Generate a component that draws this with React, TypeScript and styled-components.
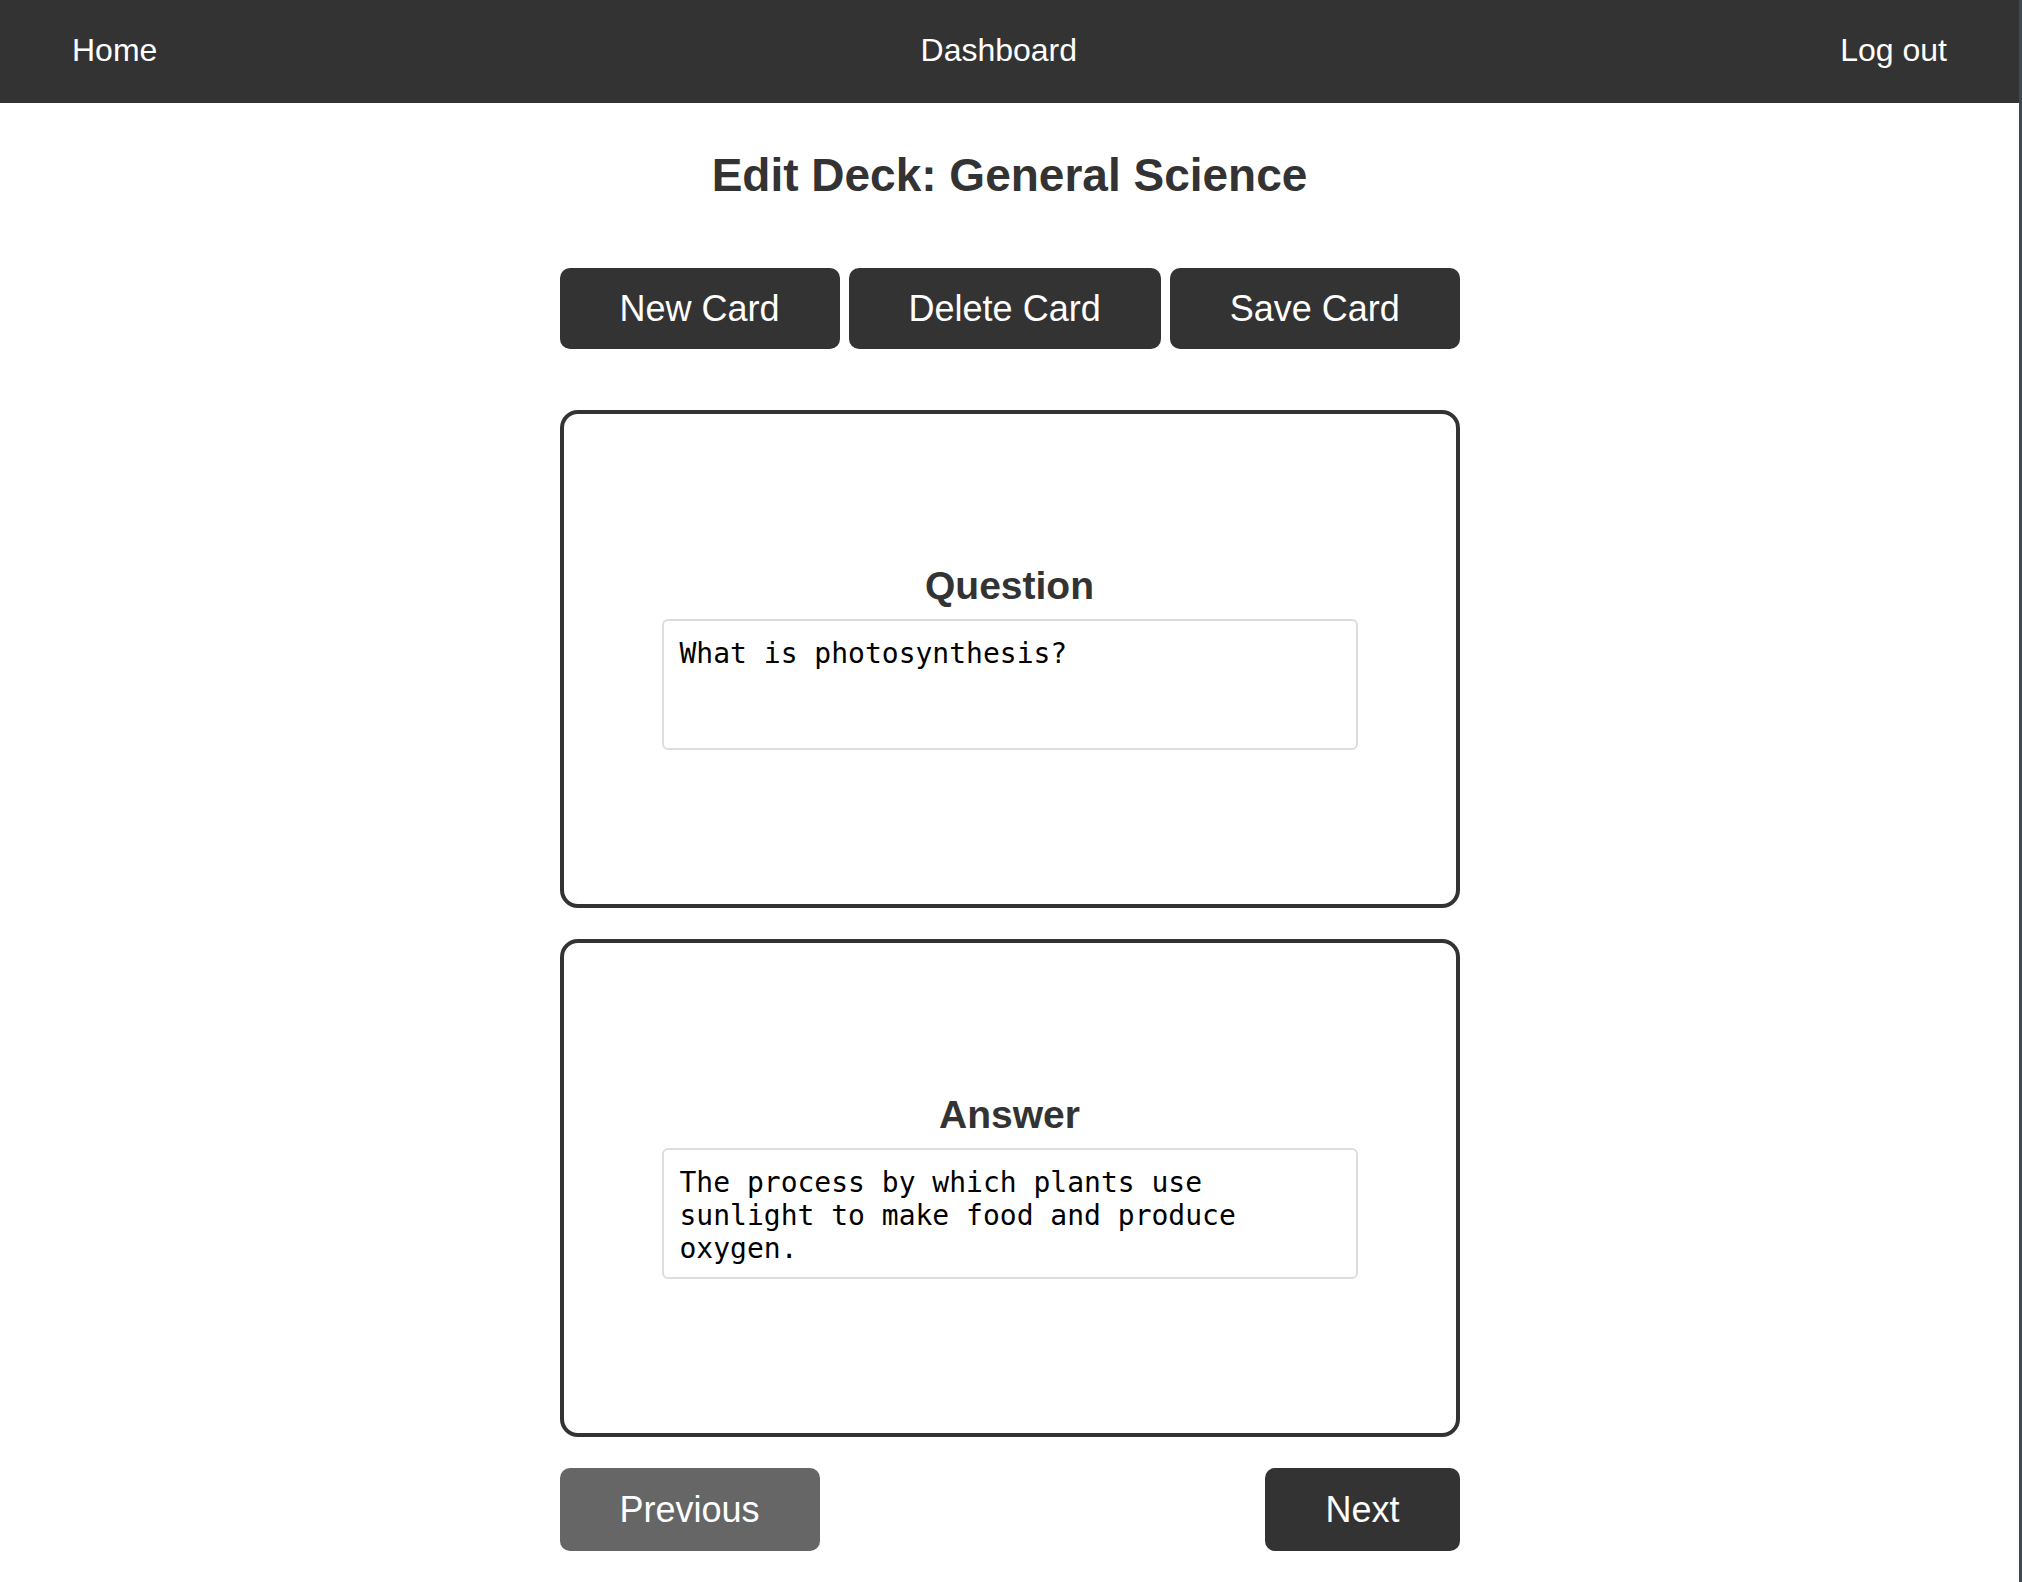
import React from 'react';
import styled, { createGlobalStyle } from 'styled-components';

const GlobalStyle = createGlobalStyle`
  html, body {
    margin: 0;
    padding: 0;
    background: #ffffff;
  }
  body {
    font-family: 'Liberation Sans', Arial, Helvetica, sans-serif;
    color: #333;
  }
  * {
    box-sizing: border-box;
  }
`;

const AppShell = styled.div`
  min-height: 1582px;
  border-right: 3px solid #3c4b52;
`;

const NavBar = styled.nav`
  height: 103px;
  background: #333;
  display: flex;
  align-items: center;
  justify-content: space-between;
  padding: 0 72px 2px;
`;

const NavLink = styled.a`
  color: #fff;
  font-size: 32px;
  text-decoration: none;
`;

const Page = styled.main`
  width: 900px;
  margin: 0 auto;
  display: flex;
  flex-direction: column;
  align-items: stretch;
`;

const Title = styled.h1`
  margin: 45px 0 0;
  font-size: 46px;
  font-weight: 700;
  line-height: 54px;
  text-align: center;
  color: #333;
`;

const Toolbar = styled.div`
  display: flex;
  gap: 9px;
  margin-top: 66px;
`;

const Button = styled.button<{ $muted?: boolean; $tall?: boolean }>`
  flex-shrink: 0;
  height: ${(p) => (p.$tall ? '83px' : '81px')};
  padding: 0 60px;
  border: none;
  border-radius: 10px;
  background: ${(p) => (p.$muted ? '#666' : '#333')};
  color: #fff;
  font-family: 'Liberation Sans', Arial, Helvetica, sans-serif;
  font-size: 36px;
  white-space: nowrap;
  cursor: pointer;
`;

const Cards = styled.div`
  display: flex;
  flex-direction: column;
  gap: 31px;
  margin-top: 61px;
`;

const Card = styled.section`
  height: 498px;
  border: 4px solid #333;
  border-radius: 18px;
  display: flex;
  flex-direction: column;
  align-items: center;
  justify-content: center;
  padding-bottom: 6px;
`;

const Label = styled.h3`
  margin: 0 0 10px;
  font-size: 39px;
  font-weight: 700;
  line-height: 46px;
  color: #333;
`;

const Field = styled.textarea`
  width: 696px;
  height: 131px;
  padding: 16px;
  border: 2px solid #ddd;
  border-radius: 6px;
  font-family: 'DejaVu Sans Mono', 'Liberation Mono', monospace;
  font-size: 28px;
  line-height: 33px;
  color: #000;
  resize: none;
  overflow: hidden;
  outline: none;
`;

const Pager = styled.div`
  display: flex;
  justify-content: space-between;
  margin-top: 31px;
`;

const EditDeck: React.FC = () => {
  return (
    <Page>
      <Title>Edit Deck: General Science</Title>
      <Toolbar>
        <Button>New Card</Button>
        <Button>Delete Card</Button>
        <Button>Save Card</Button>
      </Toolbar>
      <Cards>
        <Card>
          <Label>Question</Label>
          <Field defaultValue='What is photosynthesis?' />
        </Card>
        <Card>
          <Label>Answer</Label>
          <Field defaultValue='The process by which plants use sunlight to make food and produce oxygen.' />
        </Card>
      </Cards>
      <Pager>
        <Button $muted $tall>Previous</Button>
        <Button $tall>Next</Button>
      </Pager>
    </Page>
  );
};

const App: React.FC = () => {
  return (
    <AppShell>
      <GlobalStyle />
      <NavBar>
        <NavLink href='#'>Home</NavLink>
        <NavLink href='#'>Dashboard</NavLink>
        <NavLink href='#'>Log out</NavLink>
      </NavBar>
      <EditDeck />
    </AppShell>
  );
};

export default App;
